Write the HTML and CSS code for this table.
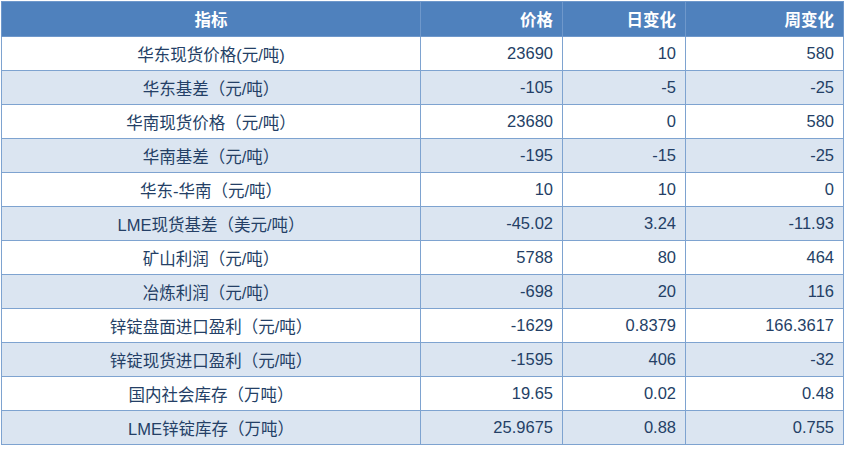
FILE: index.html
```html
<!DOCTYPE html>
<html lang="zh-CN">
<head>
<meta charset="utf-8">
<link rel="stylesheet" href="styles.css">
</head>
<body>
<table class="data">
  <colgroup>
    <col class="c1"><col class="c2"><col class="c3"><col class="c4">
  </colgroup>
  <thead>
    <tr><th class="name">指标</th><th>价格</th><th>日变化</th><th>周变化</th></tr>
  </thead>
  <tbody>
    <tr><td class="name">华东现货价格(元/吨)</td><td>23690</td><td>10</td><td>580</td></tr>
    <tr><td class="name">华东基差（元/吨）</td><td>-105</td><td>-5</td><td>-25</td></tr>
    <tr><td class="name">华南现货价格（元/吨）</td><td>23680</td><td>0</td><td>580</td></tr>
    <tr><td class="name">华南基差（元/吨）</td><td>-195</td><td>-15</td><td>-25</td></tr>
    <tr><td class="name">华东-华南（元/吨）</td><td>10</td><td>10</td><td>0</td></tr>
    <tr><td class="name">LME现货基差（美元/吨）</td><td>-45.02</td><td>3.24</td><td>-11.93</td></tr>
    <tr><td class="name">矿山利润（元/吨）</td><td>5788</td><td>80</td><td>464</td></tr>
    <tr><td class="name">冶炼利润（元/吨）</td><td>-698</td><td>20</td><td>116</td></tr>
    <tr><td class="name">锌锭盘面进口盈利（元/吨）</td><td>-1629</td><td>0.8379</td><td>166.3617</td></tr>
    <tr><td class="name">锌锭现货进口盈利（元/吨）</td><td>-1595</td><td>406</td><td>-32</td></tr>
    <tr><td class="name">国内社会库存（万吨）</td><td>19.65</td><td>0.02</td><td>0.48</td></tr>
    <tr><td class="name">LME锌锭库存（万吨）</td><td>25.9675</td><td>0.88</td><td>0.755</td></tr>
  </tbody>
</table>
</body>
</html>
```
FILE: styles.css
```css
html, body {
  margin: 0;
  padding: 0;
  background: #ffffff;
}
body {
  padding: 1px 0 0 1px;
}
.data {
  border-collapse: collapse;
  table-layout: fixed;
  width: 842px;
  font-family: "Liberation Sans", "Noto Sans CJK SC", sans-serif;
  font-size: 16.5px;
  color: #243f66;
}
.c1 { width: 419px; }
.c2 { width: 142px; }
.c3 { width: 123px; }
.c4 { width: 158px; }
.data th, .data td {
  border: 1px solid #7ea3d0;
  padding: 0 9px;
  text-align: right;
  white-space: nowrap;
  height: 34px;
  box-sizing: border-box;
}
.data th {
  background: #4f81bd;
  color: #ffffff;
  font-weight: bold;
  height: 35px;
  border-color: #6f98cb;
}
.data .name {
  text-align: center;
}
.data tbody tr:nth-child(even) td {
  background: #dbe5f1;
}
```
